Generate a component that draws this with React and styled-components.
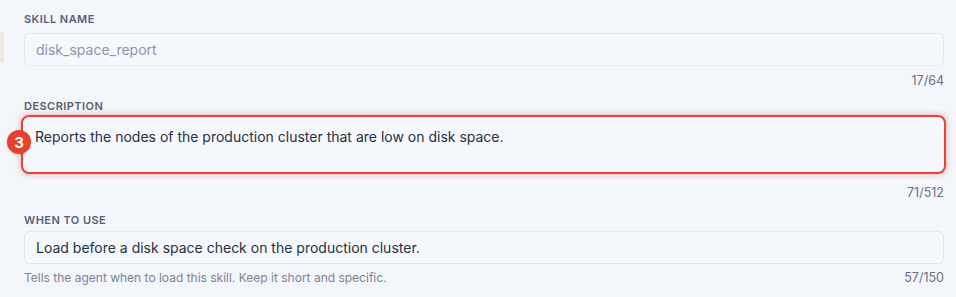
import React from "react";
import styled, { createGlobalStyle } from "styled-components";

const GlobalStyle = createGlobalStyle`
  html, body {
    margin: 0;
    padding: 0;
    background: #f3f6fb;
  }
  body {
    font-family: Inter, "Noto Sans", "Liberation Sans", sans-serif;
    -webkit-font-smoothing: antialiased;
  }
`;

const Page = styled.div`
  display: flex;
  width: 956px;
  height: 297px;
  overflow: hidden;
  background: #f3f6fb;
`;

const Rail = styled.div`
  width: 4px;
  flex: none;
  padding-top: 32px;
`;

const RailMark = styled.div`
  height: 31px;
  background: #efe6e6;
`;

const Form = styled.div`
  flex: 1;
  padding: 12px 12px 0 20px;
  display: flex;
  flex-direction: column;
`;

const Field = styled.div`
  display: flex;
  flex-direction: column;
  margin-bottom: ${(p) => p.$gap || 0}px;
`;

const Label = styled.label`
  font-size: 11px;
  line-height: 14px;
  font-weight: 600;
  letter-spacing: 0.45px;
  text-transform: uppercase;
  color: #586172;
  margin-bottom: ${(p) => p.$gap || 7}px;
`;

const Input = styled.div`
  box-sizing: border-box;
  height: 33px;
  display: flex;
  align-items: center;
  padding: 0 11px;
  border: 1px solid #e1e6ee;
  border-radius: 6px;
  background: #f5f8fd;
  font-size: 14px;
  color: ${(p) => (p.$muted ? "#8e96a4" : "#283142")};
`;

const AreaWrap = styled.div`
  position: relative;
`;

const TextArea = styled.div`
  box-sizing: border-box;
  height: 51px;
  padding: 10px 11px 8px;
  border-radius: 6px;
  background: #f5f8fd;
  font-size: 14px;
  line-height: 16px;
  color: #283142;
`;

const Highlight = styled.div`
  position: absolute;
  inset: -4px -2px -4px -3px;
  border: 2.5px solid #e6443a;
  border-radius: 8px;
  box-shadow: 0 0 6px rgba(235, 70, 60, 0.45);
  pointer-events: none;
`;

const Badge = styled.div`
  position: absolute;
  left: -17px;
  top: 11px;
  width: 24px;
  height: 24px;
  border-radius: 50%;
  background: #e6412f;
  color: #fff;
  font-size: 15px;
  font-weight: 700;
  display: flex;
  align-items: center;
  justify-content: center;
  box-shadow: 0 1px 3px rgba(0, 0, 0, 0.2);
`;

const Footer = styled.div`
  display: flex;
  justify-content: space-between;
  margin-top: ${(p) => p.$top || 7}px;
  font-size: 12px;
  line-height: 16px;
`;

const Hint = styled.span`
  color: #7c8493;
`;

const Count = styled.span`
  margin-left: auto;
  color: #6b7280;
  font-size: 12.5px;
`;

export default function App() {
  return (
    <>
      <GlobalStyle />
      <Page>
        <Rail>
          <RailMark />
        </Rail>
        <Form>
          <Field $gap={10}>
            <Label>Skill name</Label>
            <Input $muted>disk_space_report</Input>
            <Footer>
              <Count>17/64</Count>
            </Footer>
          </Field>
          <Field $gap={12}>
            <Label $gap={6}>Description</Label>
            <AreaWrap>
              <TextArea>
                Reports the nodes of the production cluster that are low on disk space.
              </TextArea>
              <Highlight />
              <Badge>3</Badge>
            </AreaWrap>
            <Footer $top={15}>
              <Count>71/512</Count>
            </Footer>
          </Field>
          <Field>
            <Label $gap={4}>When to use</Label>
            <Input>Load before a disk space check on the production cluster.</Input>
            <Footer $top={6}>
              <Hint>Tells the agent when to load this skill. Keep it short and specific.</Hint>
              <Count>57/150</Count>
            </Footer>
          </Field>
        </Form>
      </Page>
    </>
  );
}
